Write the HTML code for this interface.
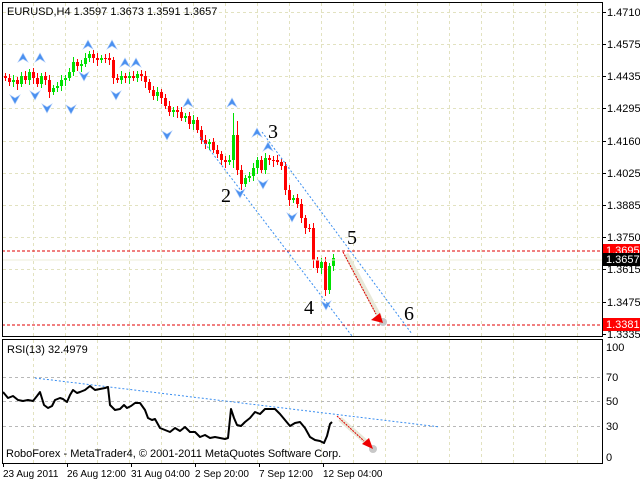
<!DOCTYPE html>
<html><head><meta charset="utf-8"><style>
html,body{margin:0;padding:0;background:#fff;width:640px;height:480px;overflow:hidden}
svg{display:block}
text{font-family:"Liberation Sans",sans-serif;font-size:11px;fill:#000}
.n{font-family:"Liberation Serif",serif;font-size:20px}
.t{font-size:10px}
</style></head><body>
<svg id="s" width="640" height="480" xmlns="http://www.w3.org/2000/svg">
<rect width="640" height="480" fill="#fff"/>
<g id="grid" stroke="#e2e2c0" stroke-width="1" stroke-dasharray="3,3"></g>
<g id="cdl"></g>
<g id="frc" fill="#4a90f0" stroke="#a8c8f8" stroke-width="0.6"></g>
<g stroke="#3a8ef0" stroke-width="1" stroke-dasharray="2,2" fill="none">
<line x1="200" y1="137" x2="352" y2="336"/>
<line x1="262" y1="132" x2="412" y2="334"/>
<line x1="35" y1="378" x2="440" y2="427"/>
</g>
<line x1="2" y1="251" x2="602" y2="251" stroke="#e00000" stroke-dasharray="3,2"/>
<line x1="2" y1="325" x2="602" y2="325" stroke="#e00000" stroke-dasharray="3,2"/>
<line x1="2" y1="260" x2="602" y2="260" stroke="#eeeed8"/>
<line x1="346" y1="254" x2="380" y2="318" stroke="#e8e8d8" stroke-width="5"/>
<line x1="343" y1="252" x2="376" y2="314" stroke="#e00000" stroke-dasharray="2,1"/>
<circle cx="383" cy="322" r="4" fill="#c8c8c8"/>
<polygon points="371,320 383,323 380,313" fill="#ee0000"/>
<line x1="340" y1="419" x2="366" y2="442" stroke="#e8e8d8" stroke-width="5"/>
<line x1="337" y1="416" x2="364" y2="441" stroke="#e00000" stroke-dasharray="2,1"/>
<circle cx="373" cy="449" r="4" fill="#c8c8c8"/>
<polygon points="362,444 373,449 369,438" fill="#ee0000"/>
<text class="n" x="221" y="202">2</text>
<text class="n" x="268" y="138">3</text>
<text class="n" x="347" y="244">5</text>
<text class="n" x="304" y="314">4</text>
<text class="n" x="404" y="320">6</text>
<rect x="2.5" y="2.5" width="600" height="334" fill="none" stroke="#000"/>
<rect x="2.5" y="339.5" width="600" height="124" fill="none" stroke="#000"/>
<text x="7" y="15">EURUSD,H4  1.3597 1.3673 1.3591 1.3657</text>
<text x="7" y="353">RSI(13) 32.4979</text>
<text x="6" y="457">RoboForex - MetaTrader4, © 2001-2011 MetaQuotes Software Corp.</text>
<polyline id="rsi" fill="none" stroke="#000" stroke-width="2" stroke-linejoin="round"/>
<g id="ax"></g>
<rect x="603" y="244" width="37" height="13" fill="#ff0000"/>
<text x="606" y="254" style="fill:#fff">1.3695</text>
<rect x="603" y="253" width="37" height="13" fill="#000"/>
<text x="606" y="263" style="fill:#fff">1.3657</text>
<rect x="603" y="318" width="37" height="13" fill="#ff0000"/>
<text x="606" y="328" style="fill:#fff">1.3381</text>
</svg>
<script>
var NS="http://www.w3.org/2000/svg";
function el(p,t,a,txt){var e=document.createElementNS(NS,t);for(var k in a)e.setAttribute(k,a[k]);if(txt!=null)e.textContent=txt;document.getElementById(p).appendChild(e);return e;}
var py=[[1.4710,12],[1.4575,44],[1.4435,76],[1.4295,108],[1.4160,141],[1.4025,173],[1.3885,205],[1.3750,237],[1.3615,269],[1.3475,302],[1.3335,334]];
py.forEach(function(p){if(p[1]>5&&p[1]<334)el("grid","line",{x1:3,y1:p[1]+.5,x2:602,y2:p[1]+.5});
 el("ax","line",{x1:602,y1:p[1]+.5,x2:606,y2:p[1]+.5,stroke:"#000"});
 el("ax","text",{x:607,y:p[1]+4},p[0].toFixed(4));});
for(var x=33;x<602;x+=32){el("grid","line",{x1:x+.5,y1:3,x2:x+.5,y2:336});el("grid","line",{x1:x+.5,y1:340,x2:x+.5,y2:463});}
[[70,377],[50,401],[30,426]].forEach(function(r){el("grid","line",{x1:3,y1:r[1]+.5,x2:602,y2:r[1]+.5,stroke:"#b8b8b8"});});
[["100",347],["70",377],["50",401],["30",426],["0",457]].forEach(function(r){el("ax","text",{x:606,y:r[1]+4},r[0]);});
[["23 Aug 2011",3],["26 Aug 12:00",67],["31 Aug 04:00",131],["2 Sep 20:00",195],["7 Sep 12:00",259],["12 Sep 04:00",323]].forEach(function(t){
 el("ax","line",{x1:t[1]+.5,y1:463,x2:t[1]+.5,y2:467,stroke:"#000"});el("ax","text",{x:t[1],y:477,"class":"t"},t[0]);});
var c=[78,82,80,84,76,80,72,78,84,76,80,92,88,86,80,78,72,62,66,64,58,54,58,60,58,58,60,78,80,76,78,76,78,74,76,82,90,96,92,98,106,112,110,112,118,116,124,120,130,140,144,142,150,154,160,162,160,135,170,184,178,176,168,160,170,158,160,160,162,166,190,200,198,204,218,228,228,260,268,262,290,266,258];
var prev=76;
c.forEach(function(cl,i){var x=5+4*i,o=prev;var up=cl<o;var col=up?"#00e000":"#ff0000";
 var t=Math.min(o,cl),b=Math.max(o,cl);if(b-t<1)b=t+1;
 var h=t-3-(i%3),l=b+3+(i%4);
 if(i==57){h=113;l=168;} if(i==58){h=121;} if(i==80){l=296;} if(i==77){l=268;}
 el("cdl","line",{x1:x+.5,y1:h,x2:x+.5,y2:l,stroke:col});
 el("cdl","rect",{x:x-1,y:t,width:3,height:b-t,fill:col});prev=cl;});
function upA(x,y){el("frc","path",{d:"M"+x+","+y+" l-5,9 l5,-3 l5,3z"});}
function dnA(x,y){el("frc","path",{d:"M"+x+","+y+" l-5,-9 l5,3 l5,-3z"});}
[[23,53],[40,53],[88,40],[112,40],[125,58],[136,58],[188,98],[232,98],[257,128],[268,142]].forEach(function(p){upA(p[0],p[1]);});
[[15,104],[35,100],[47,113],[71,114],[84,81],[116,100],[167,140],[240,198],[263,189],[292,222],[326,310]].forEach(function(p){dnA(p[0],p[1]);});
var r=[[3,392],[8,398],[13,396],[18,400],[23,401],[28,400],[33,401],[37,396],[40,392],[44,405],[48,408],[52,406],[55,400],[60,398],[63,399],[67,402],[70,395],[73,390],[77,393],[80,392],[85,390],[90,386],[95,390],[100,389],[105,388],[108,387],[110,405],[115,410],[120,409],[124,405],[127,408],[131,406],[135,403],[140,403],[145,410],[148,418],[152,420],[155,419],[160,428],[165,430],[170,432],[175,428],[180,431],[185,427],[190,432],[195,432],[200,437],[205,435],[210,438],[215,437],[220,438],[225,439],[228,438],[231,409],[234,418],[237,425],[241,426],[245,422],[250,418],[255,412],[260,414],[265,409],[270,409],[275,409],[280,414],[285,420],[290,426],[295,423],[300,422],[305,428],[310,437],[315,440],[320,441],[324,443],[327,436],[330,424],[332,422]];
document.getElementById("rsi").setAttribute("points",r.map(function(p){return p.join(",")}).join(" "));
</script>
</body></html>
